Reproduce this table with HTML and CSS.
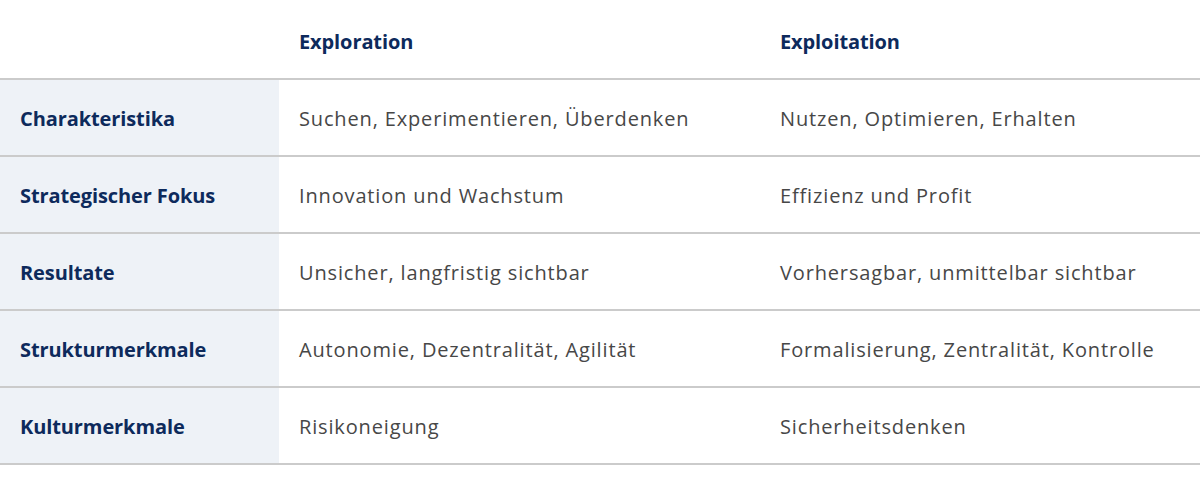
FILE: index.html
```html
<!DOCTYPE html>
<html lang="de">
<head>
<meta charset="utf-8">
<link rel="stylesheet" href="styles.css">
</head>
<body>
<table class="cmp">
  <colgroup>
    <col class="c1"><col class="c2"><col class="c3">
  </colgroup>
  <thead>
    <tr><th class="blank"></th><th>Exploration</th><th>Exploitation</th></tr>
  </thead>
  <tbody>
    <tr><th>Charakteristika</th><td>Suchen, Experimentieren, Überdenken</td><td>Nutzen, Optimieren, Erhalten</td></tr>
    <tr><th>Strategischer Fokus</th><td>Innovation und Wachstum</td><td>Effizienz und Profit</td></tr>
    <tr><th>Resultate</th><td>Unsicher, langfristig sichtbar</td><td>Vorhersagbar, unmittelbar sichtbar</td></tr>
    <tr><th>Strukturmerkmale</th><td>Autonomie, Dezentralität, Agilität</td><td>Formalisierung, Zentralität, Kontrolle</td></tr>
    <tr><th>Kulturmerkmale</th><td>Risikoneigung</td><td>Sicherheitsdenken</td></tr>
  </tbody>
</table>
</body>
</html>
```
FILE: styles.css
```css
html, body { margin: 0; padding: 0; background: #fff; }
body { font-family: "Open Sans", "Noto Sans", sans-serif; }
.cmp { width: 1200px; border-collapse: collapse; table-layout: fixed; }
.c1 { width: 279px; }
.c2 { width: 481px; }
.c3 { width: 440px; }
.cmp th, .cmp td { text-align: left; padding: 0 20px; vertical-align: middle; white-space: nowrap; }
.cmp thead th { height: 79px; padding-top: 4px; box-sizing: border-box; color: #0d2a5c; font-weight: 700; font-size: 20px; letter-spacing: -0.1px; }
.cmp tbody tr { border-top: 2px solid #cbcbcb; }
.cmp tbody tr:last-child { border-bottom: 2px solid #cbcbcb; }
.cmp tbody th, .cmp tbody td { height: 73px; padding-top: 2px; font-size: 20px; }
.cmp tbody th { background: #eef2f7; color: #0d2a5c; font-weight: 700; letter-spacing: -0.1px; }
.cmp tbody td { color: #474747; letter-spacing: 0.85px; }
```
